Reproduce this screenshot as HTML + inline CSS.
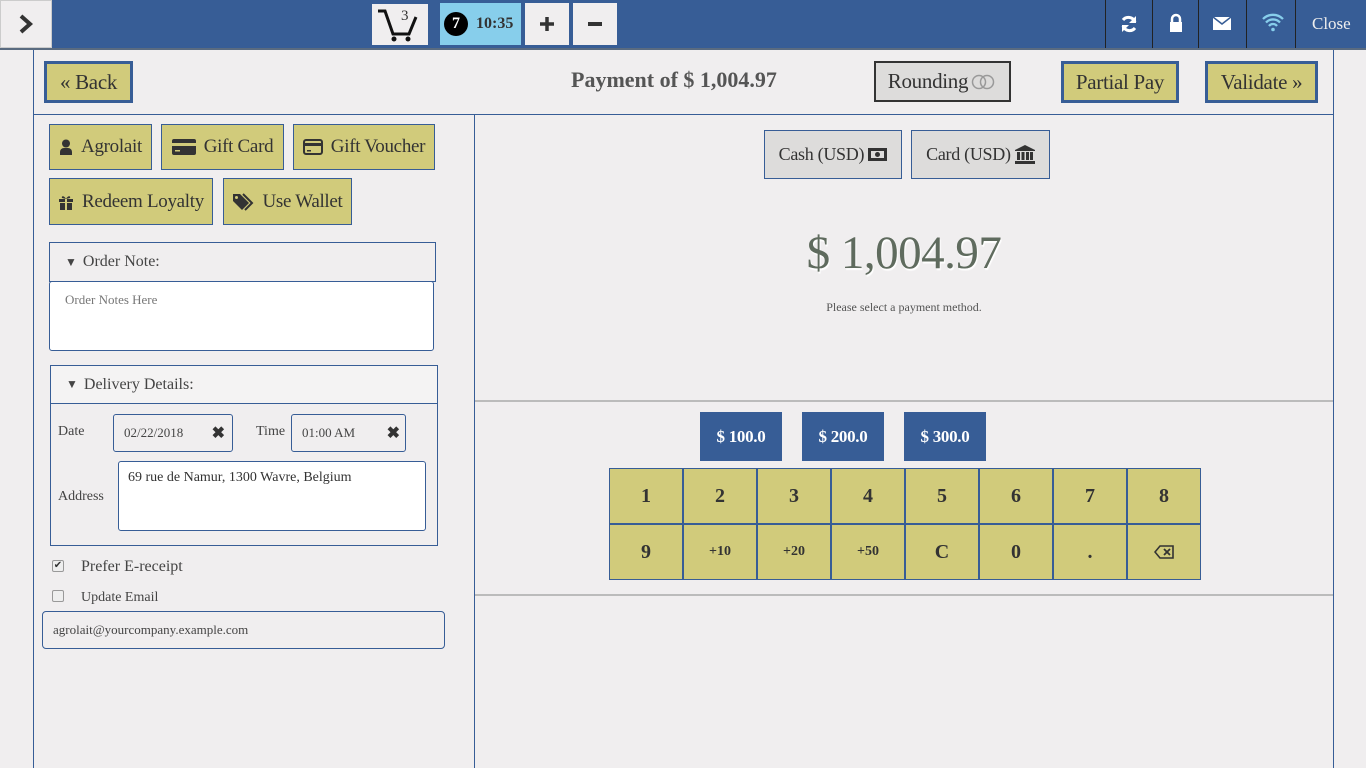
<!DOCTYPE html>
<html><head><meta charset="utf-8"><style>
*{box-sizing:border-box;margin:0;padding:0}
body{width:1366px;height:768px;overflow:hidden;background:#f0eeef;font-family:"Liberation Serif",serif;color:#333;position:relative}
.a{position:absolute}
.top{left:0;top:0;width:1366px;height:50px;background:#375d96;border-bottom:2px solid #5a6b80}
.olive{position:absolute;background:#d1cb7b;border:1px solid #375d96;display:flex;align-items:center;justify-content:center;font-size:19px;color:#333;letter-spacing:-0.3px}
.big{border:3px solid #375d96}
.sep{position:absolute;top:0;width:1px;height:48px;background:#222}
.qb{position:absolute;top:412px;width:82px;height:49px;background:#375d96;color:#fff;font-weight:bold;font-size:17px;display:flex;align-items:center;justify-content:center;letter-spacing:-0.3px}
.key{position:absolute;width:74px;height:56px;background:#d1cb7b;border:1px solid #375d96;display:flex;align-items:center;justify-content:center;font-weight:bold;font-size:20px;color:#333}
.key.s{font-size:14px}
.inp{position:absolute;background:#f0eeef;border:1px solid #375d96;border-radius:3px;font-size:13px;color:#444;display:flex;align-items:center;padding-left:10px}
</style></head><body>
<div class="a top"></div>
<div class="a" style="left:0;top:0;width:52px;height:48px;background:#f0eeef;border:1px solid #ccc;display:flex;align-items:center;justify-content:center"><svg width="16" height="22" viewBox="0 0 16 22"><path d="M3 3l9 8-9 8" stroke="#333" stroke-width="4" fill="none"/></svg></div>
<div class="a" style="left:372px;top:4px;width:56px;height:41px;background:#f0eeef"><svg width="56" height="41" viewBox="0 0 56 41"><path d="M6 7h7l8 23h16l7-17" stroke="#111" stroke-width="3" fill="none"/><circle cx="22" cy="35" r="2.5" fill="#111"/><circle cx="36" cy="35" r="2.5" fill="#111"/><text x="29" y="16" font-size="15" font-family="Liberation Serif" fill="#333">3</text></svg></div>
<div class="a" style="left:440px;top:3px;width:81px;height:42px;background:#87ceeb;display:flex;align-items:center"><span style="margin-left:4px;width:24px;height:24px;border-radius:50%;background:#000;color:#fff;font-weight:bold;font-size:16px;display:flex;align-items:center;justify-content:center">7</span><span style="margin-left:8px;font-weight:bold;font-size:16px;color:#333">10:35</span></div>
<div class="a" style="left:525px;top:3px;width:44px;height:42px;background:#f0eeef;display:flex;align-items:center;justify-content:center"><svg width="16" height="16" viewBox="0 0 16 16"><path d="M8 1v14M1 8h14" stroke="#333" stroke-width="3.5"/></svg></div>
<div class="a" style="left:573px;top:3px;width:44px;height:42px;background:#f0eeef;display:flex;align-items:center;justify-content:center"><div style="width:14px;height:4px;background:#333"></div></div>
<div class="sep" style="left:1105px"></div><div class="sep" style="left:1152px"></div><div class="sep" style="left:1198px"></div><div class="sep" style="left:1246px"></div><div class="sep" style="left:1295px"></div>
<svg class="a" style="left:1119px;top:14px" width="20" height="20" viewBox="0 0 20 20"><path d="M16 8A7 7 0 0 0 4 6M4 12a7 7 0 0 0 12 2" stroke="#fff" stroke-width="3" fill="none"/><path d="M17 2v7h-7z M3 18v-7h7z" fill="#fff"/></svg>
<svg class="a" style="left:1168px;top:12px" width="16" height="22" viewBox="0 0 16 22"><path d="M4 10V7a4 4 0 0 1 8 0v3" stroke="#fff" stroke-width="2.5" fill="none"/><rect x="2" y="10" width="12" height="10" fill="#fff"/></svg>
<svg class="a" style="left:1212px;top:15px" width="20" height="16" viewBox="0 0 20 16"><rect x="1" y="2" width="18" height="13" fill="#fff"/><path d="M1 2l9 7 9-7" stroke="#375d96" stroke-width="1.5" fill="none"/></svg>
<svg class="a" style="left:1261px;top:12px" width="24" height="20" viewBox="0 0 24 20"><path d="M2 7a14 14 0 0 1 20 0M5 10.5a9.5 9.5 0 0 1 14 0M8 14a5 5 0 0 1 8 0" stroke="#87ceeb" stroke-width="2.3" fill="none"/><circle cx="12" cy="17.5" r="1.8" fill="#87ceeb"/></svg>
<div class="a" style="left:1312px;top:14px;color:#eee;font-size:17px">Close</div>

<div class="a" style="left:33px;top:50px;width:1px;height:718px;background:#375d96"></div>
<div class="a" style="left:1333px;top:50px;width:1px;height:718px;background:#375d96"></div>
<div class="a" style="left:33px;top:114px;width:1301px;height:1px;background:#375d96"></div>
<div class="a" style="left:474px;top:115px;width:1px;height:653px;background:#375d96"></div>

<div class="olive big" style="left:44px;top:61px;width:89px;height:42px;font-size:21px">« Back</div>
<div class="a" style="left:571px;top:67px;font-weight:bold;font-size:22px;color:#555">Payment of $ 1,004.97</div>
<div class="a" style="left:874px;top:61px;width:137px;height:41px;background:#dddcdb;border:2px solid #333;display:flex;align-items:center;justify-content:center;font-size:21px;letter-spacing:-0.3px">Rounding <svg width="26" height="16" viewBox="0 0 26 16" style="margin-left:3px"><circle cx="8" cy="8" r="6.5" stroke="#999" stroke-width="1.5" fill="none"/><circle cx="16" cy="8" r="6.5" stroke="#999" stroke-width="1.5" fill="none"/></svg></div>
<div class="olive big" style="left:1061px;top:61px;width:118px;height:42px;font-size:21px">Partial Pay</div>
<div class="olive big" style="left:1205px;top:61px;width:113px;height:42px;font-size:21px">Validate »</div>

<div class="olive" style="left:49px;top:124px;width:103px;height:46px"><svg width="14" height="16" viewBox="0 0 14 16" style="margin-right:8px"><circle cx="7" cy="4.5" r="4" fill="#333"/><path d="M1 16v-3a4 4 0 0 1 4-4h4a4 4 0 0 1 4 4v3z" fill="#333"/></svg>Agrolait</div>
<div class="olive" style="left:161px;top:124px;width:123px;height:46px"><svg width="24" height="16" viewBox="0 0 24 16" style="margin-right:8px"><rect x="0" y="0" width="24" height="16" rx="2" fill="#333"/><rect x="0" y="4" width="24" height="3" fill="#d1cb7b"/><rect x="3" y="11" width="5" height="1.5" fill="#d1cb7b"/></svg>Gift Card</div>
<div class="olive" style="left:293px;top:124px;width:142px;height:46px"><svg width="20" height="16" viewBox="0 0 20 16" style="margin-right:8px"><rect x="1" y="1" width="18" height="14" rx="2" stroke="#333" stroke-width="2" fill="none"/><rect x="1" y="4" width="18" height="3" fill="#333"/><rect x="4" y="11" width="4" height="1.5" fill="#333"/></svg>Gift Voucher</div>
<div class="olive" style="left:49px;top:178px;width:164px;height:47px"><svg width="16" height="16" viewBox="0 0 16 16" style="margin-right:8px"><rect x="1" y="5" width="14" height="3" fill="#333"/><rect x="2" y="9" width="12" height="7" fill="#333"/><rect x="7" y="5" width="2" height="11" fill="#d1cb7b"/><path d="M8 5C6 1 3 2 4 4zM8 5c2-4 5-3 4-1z" fill="#333"/></svg>Redeem Loyalty</div>
<div class="olive" style="left:223px;top:178px;width:129px;height:47px"><svg width="22" height="18" viewBox="0 0 22 18" style="margin-right:8px"><path d="M1 1h7l9 9-7 7-9-9z" fill="#333"/><circle cx="4.5" cy="4.5" r="1.5" fill="#d1cb7b"/><path d="M11 1l9 9-7 7" stroke="#333" stroke-width="2" fill="none"/></svg>Use Wallet</div>

<div class="a" style="left:49px;top:242px;width:387px;height:40px;border:1px solid #375d96;display:flex;align-items:center;padding-left:15px;font-size:16px;color:#444"><span style="font-size:12px;margin-right:6px">▼</span>Order Note:</div>
<div class="a" style="left:49px;top:281px;width:385px;height:70px;background:#fff;border:1px solid #375d96;border-radius:3px;padding:10px 15px;font-size:13px;color:#777">Order Notes Here</div>

<div class="a" style="left:50px;top:365px;width:388px;height:181px;border:1px solid #375d96"></div>
<div class="a" style="left:51px;top:366px;width:386px;height:38px;background:#f4f3f3;border-bottom:1px solid #375d96;display:flex;align-items:center;padding-left:15px;font-size:16px;color:#444"><span style="font-size:12px;margin-right:6px">▼</span>Delivery Details:</div>
<div class="a" style="left:58px;top:424px;font-size:14px;color:#444">Date</div>
<div class="inp" style="left:113px;top:414px;width:120px;height:38px">02/22/2018<span style="position:absolute;right:7px;font-weight:bold;font-size:16px;color:#333">✖</span></div>
<div class="a" style="left:256px;top:424px;font-size:14px;color:#444">Time</div>
<div class="inp" style="left:291px;top:414px;width:115px;height:38px">01:00 AM<span style="position:absolute;right:5px;font-weight:bold;font-size:16px;color:#333">✖</span></div>
<div class="a" style="left:58px;top:489px;font-size:14px;color:#444">Address</div>
<div class="a" style="left:118px;top:461px;width:308px;height:70px;background:#fff;border:1px solid #375d96;border-radius:3px;padding:8px 9px;font-size:14px;color:#333">69 rue de Namur, 1300 Wavre, Belgium</div>

<div class="a" style="left:52px;top:560px;width:12px;height:12px;border:1px solid #999;border-radius:2px;background:#eee;font-size:10px;line-height:10px;text-align:center">✔</div>
<div class="a" style="left:81px;top:558px;font-size:16px;color:#444">Prefer E-receipt</div>
<div class="a" style="left:52px;top:590px;width:12px;height:12px;border:1px solid #999;border-radius:2px;background:#eee"></div>
<div class="a" style="left:81px;top:590px;font-size:14px;color:#444">Update Email</div>
<div class="inp" style="left:42px;top:611px;width:403px;height:38px;border-radius:4px">agrolait@yourcompany.example.com</div>

<div class="a" style="left:764px;top:130px;width:138px;height:49px;background:#dddcdb;border:1px solid #375d96;display:flex;align-items:center;justify-content:center;font-size:18px;letter-spacing:-0.3px">Cash (USD)&nbsp;<svg width="19" height="13" viewBox="0 0 19 13"><rect x="0" y="0" width="19" height="13" fill="#333"/><rect x="3" y="3" width="13" height="7" fill="#dddcdb"/><circle cx="9.5" cy="6.5" r="2.5" fill="#333"/></svg></div>
<div class="a" style="left:911px;top:130px;width:139px;height:49px;background:#dddcdb;border:1px solid #375d96;display:flex;align-items:center;justify-content:center;font-size:18px;letter-spacing:-0.3px">Card (USD)&nbsp;<svg width="20" height="19" viewBox="0 0 20 19"><path d="M10 0l10 5v1H0V5z" fill="#333"/><rect x="2" y="7" width="3" height="8" fill="#333"/><rect x="6.5" y="7" width="3" height="8" fill="#333"/><rect x="11" y="7" width="3" height="8" fill="#333"/><rect x="15" y="7" width="3" height="8" fill="#333"/><rect x="0" y="16" width="20" height="3" fill="#333"/></svg></div>
<div class="a" style="left:475px;top:226px;width:858px;text-align:center;font-size:47px;color:#5f6b5e;text-shadow:1px 2px 1px #fff;letter-spacing:-0.5px">$ 1,004.97</div>
<div class="a" style="left:475px;top:300px;width:858px;text-align:center;font-size:12px;color:#555">Please select a payment method.</div>
<div class="a" style="left:475px;top:400px;width:858px;height:2px;background:#bbb"></div>
<div class="a" style="left:475px;top:594px;width:858px;height:2px;background:#bbb"></div>

<div class="qb" style="left:700px">$ 100.0</div>
<div class="qb" style="left:802px">$ 200.0</div>
<div class="qb" style="left:904px">$ 300.0</div>

<div class="key" style="left:609px;top:468px">1</div><div class="key" style="left:683px;top:468px">2</div><div class="key" style="left:757px;top:468px">3</div><div class="key" style="left:831px;top:468px">4</div><div class="key" style="left:905px;top:468px">5</div><div class="key" style="left:979px;top:468px">6</div><div class="key" style="left:1053px;top:468px">7</div><div class="key" style="left:1127px;top:468px">8</div>
<div class="key" style="left:609px;top:524px">9</div><div class="key s" style="left:683px;top:524px">+10</div><div class="key s" style="left:757px;top:524px">+20</div><div class="key s" style="left:831px;top:524px">+50</div><div class="key" style="left:905px;top:524px">C</div><div class="key" style="left:979px;top:524px">0</div><div class="key" style="left:1053px;top:524px">.</div><div class="key" style="left:1127px;top:524px"><svg width="20" height="14" viewBox="0 0 20 14"><path d="M6 1h13v12H6L1 7z" stroke="#333" stroke-width="1.6" fill="none"/><path d="M10 4l6 6M16 4l-6 6" stroke="#333" stroke-width="1.8"/></svg></div>
</body></html>
